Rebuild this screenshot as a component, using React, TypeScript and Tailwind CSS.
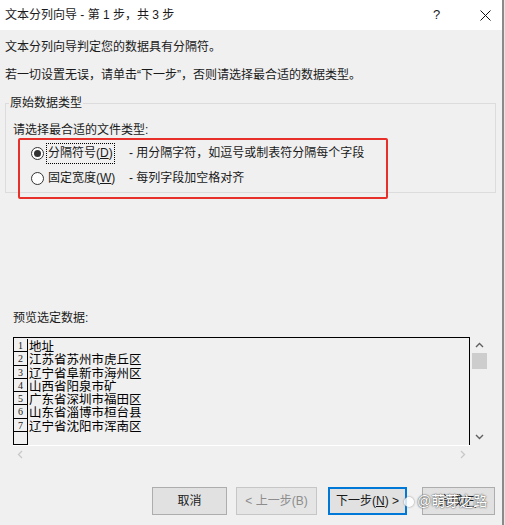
import React from 'react'

const ui = { fontFamily: '"Liberation Sans", "Noto Sans CJK SC", sans-serif' }
const rows = ['地址', '江苏省苏州市虎丘区', '辽宁省阜新市海州区', '山西省阳泉市矿', '广东省深圳市福田区', '山东省淄博市桓台县', '辽宁省沈阳市浑南区', '']

const Radio = ({ checked }: { checked?: boolean }) => (
    <span className="w-[13px] h-[13px] rounded-full border border-[#333] bg-white flex items-center justify-center shrink-0">
        {checked && <span className="w-[7px] h-[7px] rounded-full bg-[#333]" />}
    </span>
)

const App = () => {
    return (
        <div className="w-[505px] h-[525px] flex text-[12px] text-[#1a1a1a] overflow-hidden" style={ui}>
            <div className="w-[502px] flex flex-col">
                {/* title bar */}
                <div className="h-[30px] bg-white flex items-center pl-[5px] shrink-0">
                    <span className="leading-[16px] w-[180px] whitespace-nowrap">文本分列向导 - 第 1 步，共 3 步</span>
                    <span className="ml-[248px] text-[13px]">?</span>
                    <svg className="ml-[40px]" width="11" height="11" viewBox="0 0 11 11">
                        <path d="M0.5 0.5 L10.5 10.5 M10.5 0.5 L0.5 10.5" stroke="#111" strokeWidth="1" />
                    </svg>
                </div>

                {/* body */}
                <div className="flex-1 bg-[#f0f0f0] px-[5px] flex flex-col relative">
                    <p className="mt-[9px] leading-[16px]">文本分列向导判定您的数据具有分隔符。</p>
                    <p className="mt-[12px] leading-[16px]">若一切设置无误，请单击“下一步”，否则请选择最合适的数据类型。</p>

                    <div className="relative mt-[20px] w-[491px] h-[90px] border border-[#dcdcdc]">
                        <span className="absolute -top-[9px] left-[3px] px-[1px] bg-[#f0f0f0] leading-[16px]">原始数据类型</span>
                        <p className="pt-[18px] pl-[7px] leading-[16px]">请选择最合适的文件类型:</p>
                        <div className="mt-[4px] h-[22px] flex items-center pl-[25px]">
                            <Radio checked />
                            <span className="ml-[2px] w-[69px] h-[21px] border border-dotted border-black pl-[1px] leading-[19px] whitespace-nowrap">分隔符号(<u>D</u>)</span>
                            <span className="ml-[14px] whitespace-nowrap">- 用分隔字符，如逗号或制表符分隔每个字段</span>
                        </div>
                        <div className="mt-[3px] h-[22px] flex items-center pl-[25px]">
                            <Radio />
                            <span className="ml-[2px] w-[69px] h-[21px] border border-transparent pl-[1px] leading-[19px] whitespace-nowrap">固定宽度(<u>W</u>)</span>
                            <span className="ml-[14px] whitespace-nowrap">- 每列字段加空格对齐</span>
                        </div>
                        <div className="absolute left-[12px] top-[34px] w-[370px] h-[61px] border-2 border-[#e8302a] rounded-[2px]" />
                    </div>

                    <p className="mt-[117px] ml-[8px] leading-[16px]">预览选定数据:</p>

                    <div className="mt-[11px] ml-[8px] w-[475px] h-[125px] flex flex-col">
                        <div className="flex h-[108px]">
                            <div className="w-[457px] border-l border-t border-r border-black overflow-hidden pt-[1px]">
                                {rows.map((r, i) => (
                                    <div key={i} className="flex h-[13.3px]">
                                        <span className="w-[14px] border-r border-b border-black text-[10px] leading-[12px] text-center pt-[1px]" style={{ fontFamily: '"Liberation Serif", serif' }}>
                                            {r ? i + 1 : ''}
                                        </span>
                                        <span className="pl-[1px] text-[12.5px] leading-[13.3px] text-black" style={{ fontFamily: '"Noto Sans CJK SC", sans-serif' }}>{r}</span>
                                    </div>
                                ))}
                            </div>
                            <div className="w-[18px] flex flex-col items-center">
                                <svg className="mt-[5px]" width="9" height="6" viewBox="0 0 9 6">
                                    <path d="M1 5 L4.5 1.5 L8 5" stroke="#606060" strokeWidth="1.4" fill="none" />
                                </svg>
                                <div className="mt-[5px] w-[15px] h-[16px] bg-[#cdcdcd]" />
                                <svg className="mt-[65px]" width="9" height="6" viewBox="0 0 9 6">
                                    <path d="M1 1 L4.5 4.5 L8 1" stroke="#606060" strokeWidth="1.4" fill="none" />
                                </svg>
                            </div>
                        </div>
                        <div className="w-[457px] h-[17px] border-t border-white flex items-center justify-between px-[4px]">
                            <svg width="6" height="9" viewBox="0 0 6 9">
                                <path d="M5 1 L1.5 4.5 L5 8" stroke="#c8c8c8" strokeWidth="1.3" fill="none" />
                            </svg>
                            <svg width="6" height="9" viewBox="0 0 6 9">
                                <path d="M1 1 L4.5 4.5 L1 8" stroke="#c8c8c8" strokeWidth="1.3" fill="none" />
                            </svg>
                        </div>
                    </div>

                    {/* buttons */}
                    <div className="mt-[25px] flex">
                        <button className="ml-[147px] w-[75px] h-[28px] bg-[#e1e1e1] border border-[#adadad] text-[12px]">取消</button>
                        <button className="ml-[9px] w-[81px] h-[28px] bg-[#e5e5e5] border border-[#c6c6c6] text-[12px] text-[#8d8d8d]">&lt; 上一步(B)</button>
                        <button className="ml-[11px] w-[79px] h-[28px] bg-[#e1e1e1] border-2 border-[#0078d7] text-[12px]">下一步(<u>N</u>) &gt;</button>
                        <button className="ml-[15px] w-[73px] h-[28px] bg-[#e1e1e1] border border-[#adadad] text-[12px]">完成(<u>F</u>)</button>
                    </div>

                    {/* watermark */}
                    <div className="absolute left-[404px] top-[461px] flex items-center gap-[3px] text-white text-[14px]" style={{ textShadow: '0 0 2px #555, 0 0 1px #555' }}>
                        <span className="w-[10px] h-[10px] rounded-full bg-white/80" style={{ boxShadow: '0 0 2px #777' }} />
                        <span>@萌芽之路</span>
                    </div>
                </div>
            </div>
            <div className="w-[2px] bg-[#8a8a8a]" />
            <div className="w-[1px] bg-[#e6e6e6]" />
        </div>
    )
}

export default App
